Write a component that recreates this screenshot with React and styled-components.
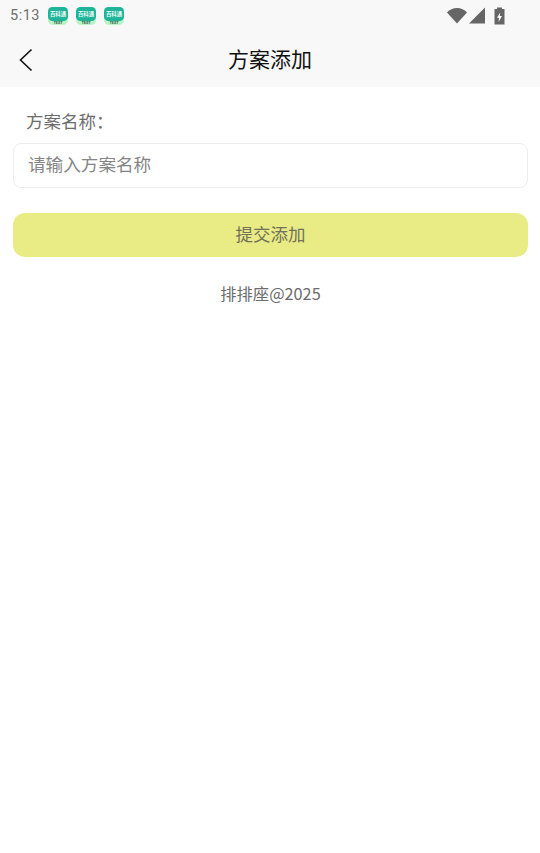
import React from 'react';
import styled, { createGlobalStyle } from 'styled-components';

const GlobalStyle = createGlobalStyle`
	html, body {
		margin: 0;
		padding: 0;
		background: #fff;
		font-family: 'Noto Sans CJK SC', 'Noto Sans', sans-serif;
	}
	* {
		box-sizing: border-box;
	}
`;

const Page = styled.div`
	width: 540px;
	height: 853px;
	background: #fff;
	overflow: hidden;
`;

const Top = styled.div`
	height: 87px;
	background: #f8f8f8;
`;

const StatusBar = styled.div`
	height: 31px;
	display: flex;
	align-items: center;
	padding: 0 0 0 10px;
`;

const Time = styled.span`
	font-family: Roboto, sans-serif;
	font-size: 14.5px;
	color: #6f6f6f;
	width: 38px;
	letter-spacing: 0.5px;
`;

const NotifyIcons = styled.div`
	display: flex;
	gap: 8px;
`;

const StatusIcons = styled.div`
	margin-left: auto;
	margin-right: 35px;
	display: flex;
	align-items: center;
	gap: 1px;
`;

const NavBar = styled.div`
	height: 56px;
	padding-bottom: 3px;
	display: flex;
	align-items: center;
	justify-content: center;
	position: relative;
`;

const BackButton = styled.div`
	position: absolute;
	left: 18px;
	top: 17px;
	width: 16px;
	height: 24px;
`;

const Title = styled.h1`
	margin: 0;
	font-size: 21px;
	font-weight: 400;
	line-height: 30px;
	color: #111;
`;

const Form = styled.div`
	padding: 21px 12px 0 13px;
`;

const Label = styled.div`
	padding-left: 13px;
	font-size: 17.5px;
	line-height: 25px;
	color: #6c6c6c;
`;

const Input = styled.input`
	display: block;
	width: 100%;
	height: 45px;
	margin-top: 10px;
	padding: 0 14px 5px;
	border: 1px solid #ededed;
	border-radius: 8px;
	outline: none;
	background: #fff;
	font-family: inherit;
	font-size: 17.6px;
	color: #333;
	&::placeholder {
		color: #858585;
		opacity: 1;
	}
`;

const Submit = styled.button`
	display: block;
	width: 100%;
	height: 44px;
	margin-top: 25px;
	padding: 0 0 4px;
	border: 0;
	border-radius: 12px;
	background: #e9eb84;
	font-family: inherit;
	font-size: 17.5px;
	color: #71715c;
`;

const Footer = styled.div`
	margin-top: 24px;
	text-align: center;
	font-size: 16.3px;
	line-height: 24px;
	color: #6c6c6c;
`;

function AppBadge() {
	return (
		<svg width="20" height="18" viewBox="0 0 20 18">
			<rect x="0" y="0" width="20" height="18" rx="5" fill="#b9f3c6" />
			<rect x="0" y="0" width="20" height="14" rx="4.5" fill="#1fb39a" />
			<text x="10" y="9.4" textAnchor="middle" fontSize="5.4" fontWeight="700" fill="#eefbf7" fontFamily="'Noto Sans CJK SC', sans-serif">
				百科通
			</text>
			<text x="10" y="17" textAnchor="middle" fontSize="3.8" fontWeight="700" fill="#2f5f4c" fontFamily="Roboto, sans-serif">
				TEST
			</text>
		</svg>
	);
}

function App() {
	return (
		<Page>
			<GlobalStyle />
			<Top>
				<StatusBar>
					<Time>5:13</Time>
					<NotifyIcons>
						<AppBadge />
						<AppBadge />
						<AppBadge />
					</NotifyIcons>
					<StatusIcons>
						<svg width="20" height="17" viewBox="0 0 20 17">
							<path d="M0 5.5C2.6 2.6 6 1 10 1S17.4 2.6 20 5.5L10 16.5Z" fill="#666" />
						</svg>
						<svg width="17" height="17" viewBox="0 0 17 17">
							<path d="M17 0.5V16.5H1Z" fill="#666" />
						</svg>
						<svg width="11" height="18" viewBox="0 0 11 18" style={{ marginLeft: 8 }}>
							<path d="M0.5 2H3V0.5H8V2H10.5V17.5H0.5Z" fill="#666" />
							<path d="M6.2 5.5L3 10.8H5L4.6 15L8 9H5.8Z" fill="#fff" />
						</svg>
					</StatusIcons>
				</StatusBar>
				<NavBar>
					<BackButton>
						<svg width="16" height="24" viewBox="0 0 16 24">
							<path d="M13.5 1.5L2.5 12L13.5 22.5" fill="none" stroke="#111" strokeWidth="1.6" />
						</svg>
					</BackButton>
					<Title>方案添加</Title>
				</NavBar>
			</Top>
			<Form>
				<Label>方案名称：</Label>
				<Input placeholder="请输入方案名称" readOnly />
				<Submit>提交添加</Submit>
				<Footer>排排座@2025</Footer>
			</Form>
		</Page>
	);
}

export default App;
